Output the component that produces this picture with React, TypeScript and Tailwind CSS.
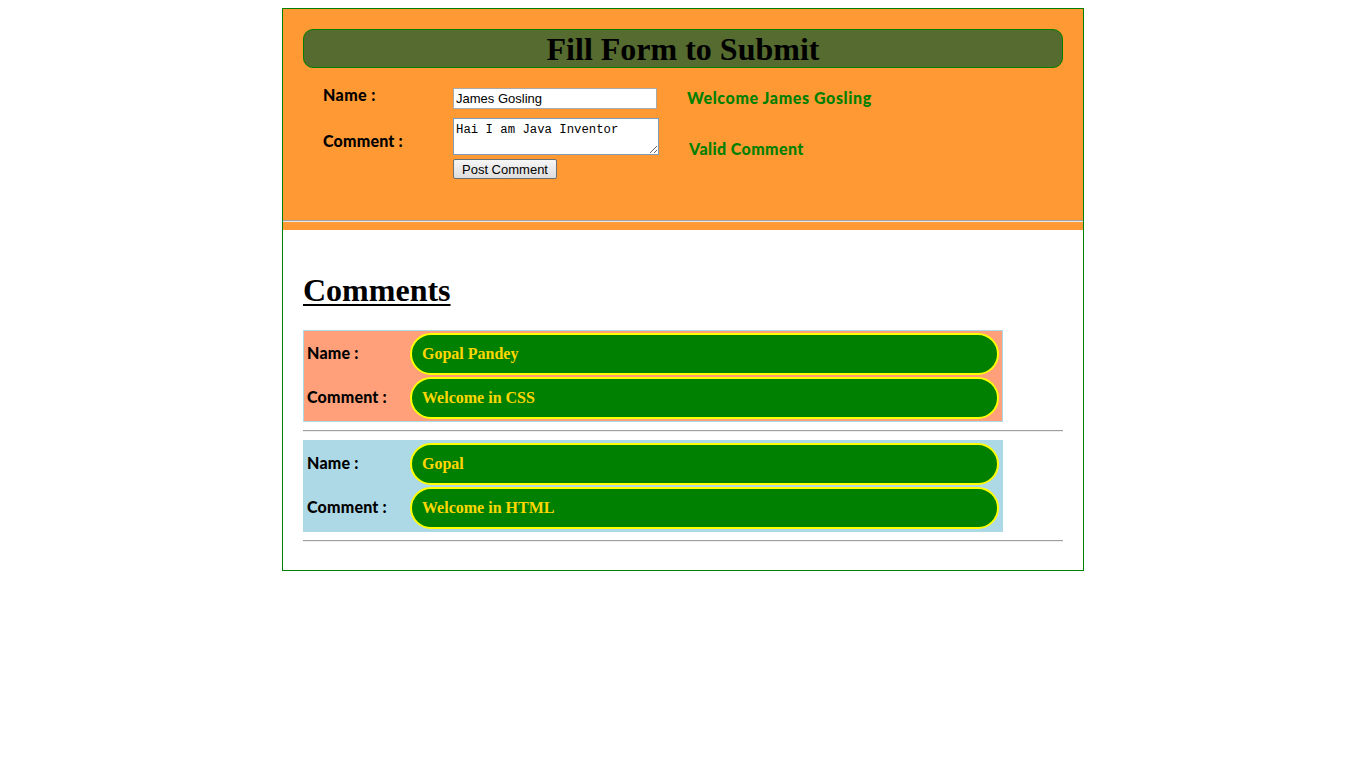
import React from "react";

const sans = { fontFamily: "'Lato', 'DejaVu Sans', sans-serif" };

function CommentBox({ bg, name, comment }: { bg: string; name: string; comment: string }) {
  const rows = [
    ["Name :", name],
    ["Comment :", comment],
  ];
  return (
    <div className={`w-[700px] border border-[#add8e6] p-[2px] flex flex-col gap-[2px] ${bg}`}>
      {rows.map(([label, value]) => (
        <div key={label} className="flex items-center gap-[2px]">
          <div className="w-[102px] pl-[1px] -mt-[3px] text-[16px] tracking-[0.2px] font-black text-black" style={sans}>
            {label}
          </div>
          <div className="h-[42px] w-[589px] flex items-center rounded-[21px] border-2 border-[#ffff00] bg-[#008000] pl-[10px] text-[16px] font-bold text-[#ffd700] [font-family:'Liberation_Serif',serif]">
            {value}
          </div>
        </div>
      ))}
    </div>
  );
}

export default function App() {
  return (
    <div className="bg-white min-h-[768px] pt-2">
      <div className="mx-auto w-[802px] h-[563px] border border-[#008000]">
        <div className="bg-[#ff9933] h-[221px] flex flex-col">
          <div className="px-5 pt-5">
            <div className="h-[39px] rounded-[10px] border border-[#008000] bg-[#556b2f] flex items-center justify-center text-[32px] font-bold text-black [font-family:'Liberation_Serif',serif]">
              Fill Form to Submit
            </div>
          </div>
          <div className="flex flex-col pl-[40px] mt-[19px]">
            <div className="flex items-center h-[22px]">
              <div className="w-[130px] text-[16px] tracking-[0.4px] font-black text-black -mt-[6px]" style={sans}>
                Name :
              </div>
              <input
                readOnly
                value="James Gosling"
                className="w-[204px] h-[21px] border border-[#a9a9a9] bg-white px-[2px] text-[13px] text-black outline-none [font-family:'Liberation_Sans',sans-serif]"
              />
              <div className="ml-[30px] -mt-[1px] text-[16px] tracking-[0.6px] font-black text-[#008000]" style={sans}>
                Welcome James Gosling
              </div>
            </div>
            <div className="flex mt-[9px]">
              <div className="w-[130px] pt-[11px] text-[16px] tracking-[0.2px] font-black text-black" style={sans}>
                Comment :
              </div>
              <div className="flex flex-col gap-[4px]">
                <textarea
                  readOnly
                  value="Hai I am Java Inventor"
                  className="w-[206px] h-[37px] border border-[#7f9db9] bg-white px-[2px] pt-[4px] text-[12.3px] leading-[14px] text-black outline-none resize-y [font-family:'Liberation_Mono',monospace]"
                />
                <button className="w-[104px] h-[20px] border border-[#707070] rounded-[2px] bg-gradient-to-b from-[#f6f6f6] to-[#dddddd] text-[13px] leading-none text-black [font-family:'Liberation_Sans',sans-serif]">
                  Post Comment
                </button>
              </div>
              <div className="ml-[30px] pt-[19px] text-[16px] tracking-[0.4px] font-black text-[#008000]" style={sans}>
                Valid Comment
              </div>
            </div>
          </div>
          <div className="mt-auto mb-[8px] border-t border-[#a0a0a0] border-b border-b-[#e8e8e8]" />
        </div>
        <div className="px-5">
          <h2 className="mt-[42px] text-[32px] leading-[37px] font-bold text-black underline decoration-2 underline-offset-[3px] [font-family:'Liberation_Serif',serif]">
            Comments
          </h2>
          <div className="mt-[21px]">
            <CommentBox bg="bg-[#ffa07a]" name="Gopal Pandey" comment="Welcome in CSS" />
          </div>
          <div className="mt-[8px] border-t border-[#a0a0a0] border-b border-b-[#eeeeee]" />
          <div className="mt-[8px]">
            <CommentBox bg="bg-[#add8e6]" name="Gopal" comment="Welcome in HTML" />
          </div>
          <div className="mt-[8px] border-t border-[#a0a0a0] border-b border-b-[#eeeeee]" />
        </div>
      </div>
    </div>
  );
}
